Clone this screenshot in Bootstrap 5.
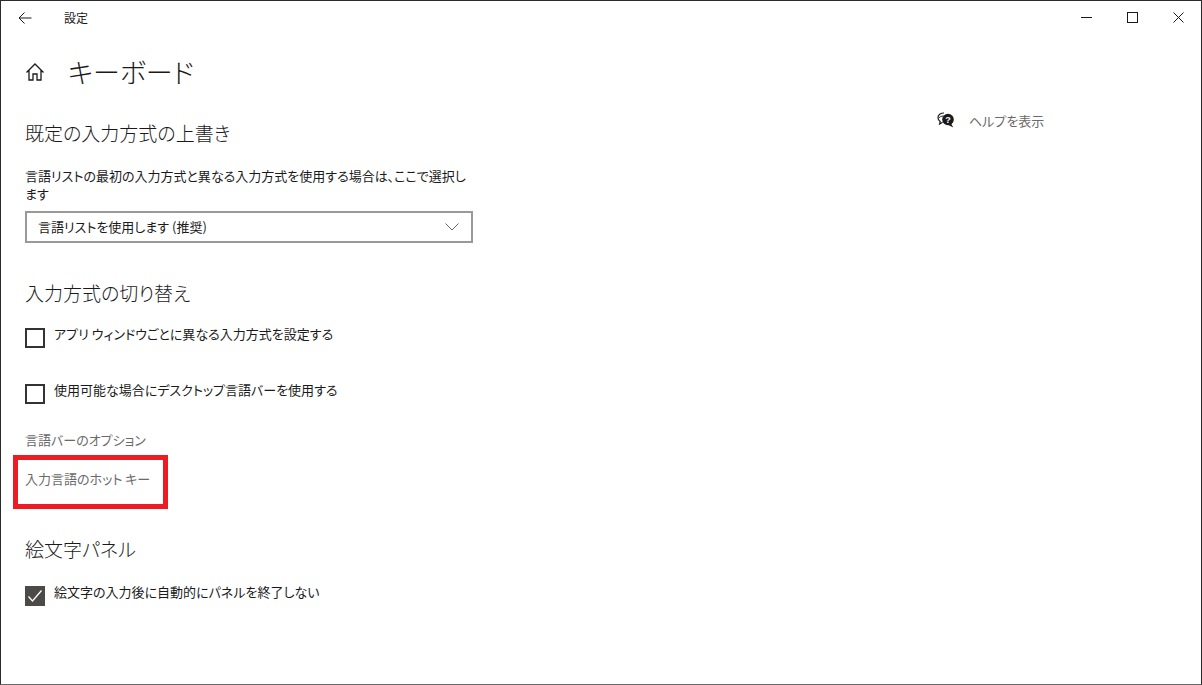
<!DOCTYPE html>
<html lang="ja">
  <head>
    <meta charset="UTF-8" />
    <meta name="viewport" content="width=device-width, initial-scale=1.0" />
    <link href="https://cdn.jsdelivr.net/npm/bootstrap@5.3.0/dist/css/bootstrap.min.css" rel="stylesheet" />
    <title>設定</title>
    <style>
      html, body { height: 685px; overflow: hidden; }
      body {
        background: #fff;
        color: #1a1a1a;
        font-family: "Noto Sans CJK JP", "Liberation Sans", sans-serif;
        font-feature-settings: "palt";
        font-size: 13px;
        line-height: 18px;
      }
      .win-frame {
        height: 685px;
        border: 1px solid #2b2b2b;
        border-bottom-color: #6b6b6b;
      }
      .title-bar { height: 33px; }
      .back-btn { width: 48px; padding-left: 17px; }
      .title-text { font-size: 12px; margin-left: 15px; }
      .win-ctl { width: 46px; }
      .page-head { height: 36px; margin-top: 20px; padding-left: 24px; }
      .page-title { font-size: 27px; line-height: 36px; margin: 0 0 0 23px; font-weight: 300; }
      .settings-col { width: 448px; margin-left: 24px; }
      .sec-title { font-size: 19px; line-height: 26px; font-weight: 300; margin: 0; }
      .sec-first { margin-top: 30px; }
      .sec-second { margin-top: 37px; }
      .sec-third { margin-top: 27px; }
      .hint-text { margin: 21px 0 0; }
      .combo-box {
        height: 32px;
        margin-top: 8px;
        border: 2px solid #999;
        padding: 0 12px 0 11px;
      }
      .check-row { height: 24px; gap: 9px; }
      .check-box { width: 20px; height: 20px; border: 2px solid #333; flex: none; }
      .check-box.is-on { background: #4c4a48; border-color: #4c4a48; }
      .check-text { margin-top: -3px; }
      .row-a { margin-top: 22px; }
      .row-b { margin-top: 32px; }
      .row-c { margin-top: 24px; }
      .link-gray { color: #6a6a6a; }
      .link-one { margin-top: 23px; }
      .red-mark {
        width: 155px;
        height: 54px;
        margin: 6px 0 0 -12px;
        border: 5px solid #ed1c24;
        padding: 10px 0 0 7px;
      }
      .help-col { margin-left: 464px; margin-top: 22px; gap: 14px; }
    </style>
  </head>
  <body>
    <div class="win-frame d-flex flex-column">
      <div class="title-bar d-flex align-items-center">
        <div class="back-btn d-flex">
          <svg width="14" height="12" viewBox="0 0 14 12" fill="none" stroke="#1a1a1a" stroke-width="1"><path d="M1 6h12.500M6.500 .5 1 6l5.500 5.500"/></svg>
        </div>
        <span class="title-text">設定</span>
        <div class="ms-auto d-flex">
          <div class="win-ctl d-flex justify-content-center">
            <svg width="11" height="11" viewBox="0 0 11 11" stroke="#1a1a1a" fill="none"><path d="M0 5.500h11"/></svg>
          </div>
          <div class="win-ctl d-flex justify-content-center">
            <svg width="11" height="11" viewBox="0 0 11 11" stroke="#1a1a1a" fill="none"><rect x=".5" y=".5" width="10" height="10"/></svg>
          </div>
          <div class="win-ctl d-flex justify-content-center">
            <svg width="11" height="11" viewBox="0 0 11 11" stroke="#1a1a1a" fill="none"><path d="M.5 .5l10 10M10.500 .5l-10 10"/></svg>
          </div>
        </div>
      </div>

      <div class="page-head d-flex align-items-center">
        <svg width="20" height="20" viewBox="0 0 20 20" fill="none" stroke="#1a1a1a" stroke-width="1.300"><path d="M1.500 10.500 10 2l8.500 8.500M4 8.500V18h4v-6h4v6h4V8.500"/></svg>
        <h1 class="page-title">キーボード</h1>
      </div>

      <div class="d-flex">
        <div class="settings-col">
          <h2 class="sec-title sec-first">既定の入力方式の上書き</h2>
          <p class="hint-text">言語リストの最初の入力方式と異なる入力方式を使用する場合は、ここで選択します</p>
          <div class="combo-box d-flex align-items-center justify-content-between">
            <span>言語リストを使用します (推奨)</span>
            <svg width="14" height="8" viewBox="0 0 14 8" fill="none" stroke="#666"><path d="M.5 .5 7 7l6.500-6.500"/></svg>
          </div>

          <h2 class="sec-title sec-second">入力方式の切り替え</h2>
          <div class="check-row row-a d-flex align-items-start">
            <span class="check-box"></span>
            <span class="check-text">アプリ ウィンドウごとに異なる入力方式を設定する</span>
          </div>
          <div class="check-row row-b d-flex align-items-start">
            <span class="check-box"></span>
            <span class="check-text">使用可能な場合にデスクトップ言語バーを使用する</span>
          </div>
          <div class="link-gray link-one">言語バーのオプション</div>
          <div class="red-mark link-gray">入力言語のホット キー</div>

          <h2 class="sec-title sec-third">絵文字パネル</h2>
          <div class="check-row row-c d-flex align-items-start">
            <span class="check-box is-on d-flex align-items-center justify-content-center">
              <svg width="14" height="12" viewBox="0 0 14 12" fill="none" stroke="#fff" stroke-width="1.300"><path d="M.5 6.500 4.500 11 13.500 .5"/></svg>
            </span>
            <span class="check-text">絵文字の入力後に自動的にパネルを終了しない</span>
          </div>
        </div>

        <div class="help-col d-flex align-items-start">
          <svg width="18" height="16" viewBox="0 0 18 16">
            <path d="M7 1C3.500 1 1 3 1 5.700c0 1.600.9 2.900 2.200 3.700L2.600 12l3-1.800" fill="#fff" stroke="#1a1a1a" stroke-width="1.200"/>
            <path d="M6.500 4C4 4 2.500 5 2 6" fill="none" stroke="#1a1a1a"/>
            <circle cx="11" cy="7.500" r="5.800" fill="#1a1a1a"/>
            <path d="M14 11.500l2.300 4-5-2.500z" fill="#1a1a1a"/>
            <text x="11" y="10.500" text-anchor="middle" font-size="9" font-weight="700" fill="#fff" font-family="Liberation Sans, sans-serif">?</text>
          </svg>
          <span class="link-gray">ヘルプを表示</span>
        </div>
      </div>
    </div>

    <script src="https://cdn.jsdelivr.net/npm/bootstrap@5.3.0/dist/js/bootstrap.bundle.min.js"></script>
  </body>
</html>
